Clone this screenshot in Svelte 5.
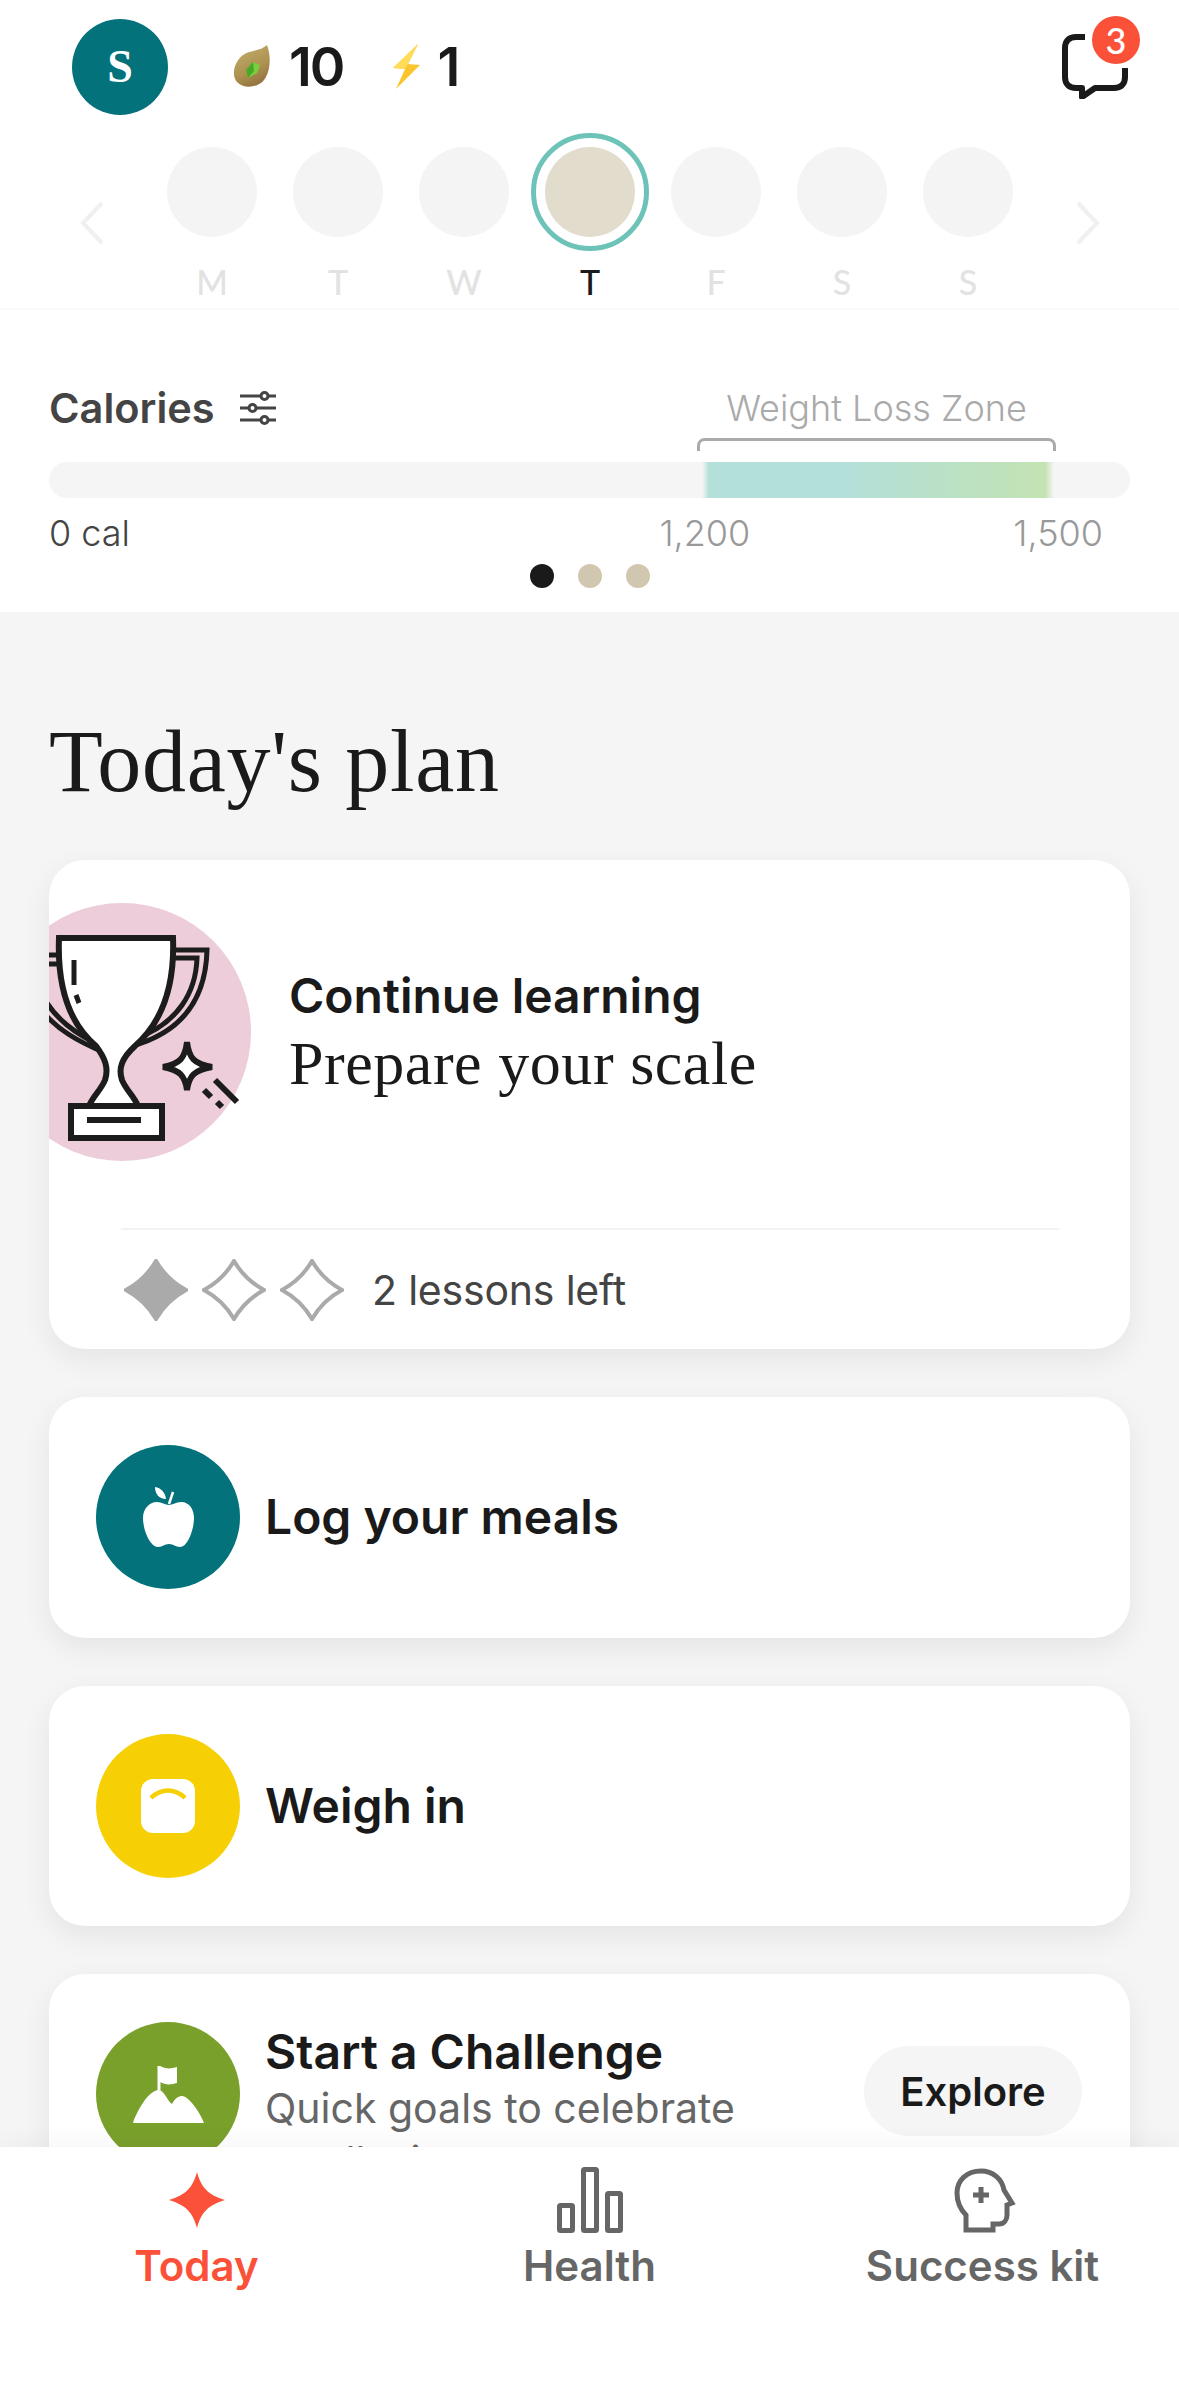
<script>
  const days = [
    { label: 'M' },
    { label: 'T' },
    { label: 'W' },
    { label: 'T', today: true },
    { label: 'F' },
    { label: 'S' },
    { label: 'S' }
  ];
</script>

<div class="page">
  <div class="scroller">
    <section class="top">
      <header class="bar">
        <div class="avatar">S</div>
        <svg class="seed" viewBox="0 0 36 42" aria-hidden="true">
          <defs>
            <linearGradient id="seedFill" x1="0.3" y1="0.1" x2="0.7" y2="1">
              <stop offset="0" stop-color="#bfa865" />
              <stop offset="0.55" stop-color="#ac9150" />
              <stop offset="1" stop-color="#8f6f3d" />
            </linearGradient>
          </defs>
          <path d="M33 0C37 10 37 26 30 35 24 43 9 44 3 37-3 30 0 17 9 10 16 5 27 6 33 0Z" fill="url(#seedFill)" />
          <path d="M19 17 26 20 23 28 14 33 12 25Z" fill="#76d03e" />
          <path d="M19 17 20 26 14 33 12 25Z" fill="#4aa828" />
        </svg>
        <span class="count">10</span>
        <svg class="bolt" viewBox="0 0 27 45" aria-hidden="true">
          <path d="M25 0 0 24 12 25 3 45 27 21 15 20Z" fill="#fbc52d" />
          <path d="M25 0 0 24 12 25 15 20Z" fill="#ffdc5a" />
        </svg>
        <span class="count">1</span>
        <div class="chat">
          <svg viewBox="0 0 66 65" aria-hidden="true">
            <path d="M23 3H14C7 3 3 7 3 14V43C3 50 7 54 14 54H20V63L33 54H52C59 54 63 50 63 43V34" fill="none" stroke="#1a1a1a" stroke-width="6" stroke-linejoin="round" />
          </svg>
          <span class="badge">3</span>
        </div>
      </header>

      <div class="week">
        <svg class="chev" viewBox="0 0 24 44" aria-hidden="true"><path d="M22 2 3 22 22 42" /></svg>
        {#each days as day}
          <div class="day" class:today={day.today}>
            <div class="ring"><div class="dot"></div></div>
            <span>{day.label}</span>
          </div>
        {/each}
        <svg class="chev" viewBox="0 0 24 44" aria-hidden="true"><path d="M2 2 21 22 2 42" /></svg>
      </div>

      <div class="calories">
        <div class="cal-head">
          <h3>Calories</h3>
          <svg class="sliders" viewBox="0 0 36 36" aria-hidden="true">
            <path d="M0 6H21M28 6H36M0 18H9M16 18H36M0 30H21M28 30H36" />
            <circle cx="24.5" cy="6" r="3.5" />
            <circle cx="12.5" cy="18" r="3.5" />
            <circle cx="24.5" cy="30" r="3.5" />
          </svg>
          <div class="zone-label">
            <span>Weight Loss Zone</span>
            <svg viewBox="0 0 359 13" aria-hidden="true"><path d="M1.5 13V8C1.5 4 4 1.5 8 1.5H351C355 1.5 357.5 4 357.5 8V13" /></svg>
          </div>
        </div>
        <div class="track"><div class="zone"></div></div>
        <div class="ticks">
          <span class="zero">0 cal</span>
          <span class="tick">1,200</span>
          <span class="tick last">1,500</span>
        </div>
        <div class="pager">
          <i class="on"></i><i></i><i></i>
        </div>
      </div>
    </section>

    <main class="plan">
      <h1>Today's plan</h1>

      <article class="card learn">
        <div class="learn-top">
          <div class="pic">
            <svg viewBox="-7 903 258 258" aria-hidden="true">
              <g fill="none" stroke="#1c1c1c" stroke-width="5">
                <path d="M40 955H59M40 964H62" />
                <path d="M40 990C52 1018 78 1036 103 1046M40 1008C56 1030 80 1042 103 1052" />
                <path d="M173 950H207C206 990 190 1030 132 1046M173 958H197C196 990 180 1024 132 1040" />
                <path d="M59 938H173C175 990 160 1024 135 1046 122 1058 118 1068 122 1080 126 1090 134 1096 138 1106H89C93 1096 101 1090 105 1080 109 1068 105 1058 96 1046 70 1024 57 990 59 938Z" fill="#fff" stroke-width="6" />
                <path d="M74 960V985M76 995 79 1003" stroke-width="5" />
                <rect x="71" y="1106" width="91" height="32" fill="#fff" stroke-width="6" />
                <path d="M87 1120H141" stroke-width="6" />
                <path d="M187 1042C189 1058 194 1064 212 1067 194 1070 189 1076 187 1090 185 1076 180 1070 163 1067 180 1064 185 1058 187 1042Z" fill="#fff" stroke-width="6" />
                <path d="M215 1080 237 1102M204 1090 211 1097M217 1102 222 1107" stroke-width="6" />
              </g>
            </svg>
          </div>
          <div class="learn-text">
            <h2>Continue learning</h2>
            <p>Prepare your scale</p>
          </div>
        </div>
        <div class="learn-foot">
          <svg class="diamond" viewBox="0 0 64 62" aria-hidden="true"><path class="fill" d="M32 2C39 14 49 24 62 31 49 38 39 48 32 60 25 48 15 38 2 31 15 24 25 14 32 2Z" /></svg>
          <svg class="diamond" viewBox="0 0 64 62" aria-hidden="true"><path d="M32 2C39 14 49 24 62 31 49 38 39 48 32 60 25 48 15 38 2 31 15 24 25 14 32 2Z" /></svg>
          <svg class="diamond" viewBox="0 0 64 62" aria-hidden="true"><path d="M32 2C39 14 49 24 62 31 49 38 39 48 32 60 25 48 15 38 2 31 15 24 25 14 32 2Z" /></svg>
          <span>2 lessons left</span>
        </div>
      </article>

      <article class="card task">
        <div class="circle teal">
          <svg viewBox="0 0 51 60" width="51" height="60" aria-hidden="true">
            <path d="M12 0C18 1 22 5 23 12 16 12 12 7 12 0Z" fill="#fff" />
            <path d="M30 5 26 17" stroke="#fff" stroke-width="2.5" fill="none" />
            <path d="M14 15C19 15 22 18 26 18 30 18 33 15 38 15 47 15 51 23 51 31 51 42 45 60 37 60 32 60 31 57 26 57 21 57 20 60 15 60 7 60 0 43 0 31 0 22 6 15 14 15Z" fill="#fff" />
          </svg>
        </div>
        <h2>Log your meals</h2>
      </article>

      <article class="card task">
        <div class="circle yellow">
          <div class="scale">
            <svg viewBox="0 0 36 12" width="36" height="12" aria-hidden="true"><path d="M1 10C11 0 25 0 35 10" fill="none" stroke="#f6d004" stroke-width="4.5" /></svg>
          </div>
        </div>
        <h2>Weigh in</h2>
      </article>

      <article class="card task challenge">
        <div class="circle green">
          <svg viewBox="0 0 71 57" width="71" height="57" aria-hidden="true">
            <path d="M26 0V24" stroke="#fff" stroke-width="3" />
            <path d="M27 0C32 3 38 3 44 1V17C38 19 32 19 27 16Z" fill="#fff" />
            <path d="M0 57C2 50 14 24 26 24 31 24 35 36 39 38 42 32 46 30 49 30 56 30 68 48 71 57Z" fill="#fff" />
          </svg>
        </div>
        <div class="challenge-text">
          <h2>Start a Challenge</h2>
          <p>Quick goals to celebrate small wins</p>
        </div>
        <button>Explore</button>
      </article>
    </main>
  </div>

  <nav>
    <div class="tab active">
      <svg viewBox="0 0 66 66" aria-hidden="true">
        <path d="M33 5C37 20 44 28 61 33 44 38 37 46 33 61 29 46 22 38 5 33 22 28 29 20 33 5Z" fill="#fb5138" />
      </svg>
      <span>Today</span>
    </div>
    <div class="tab">
      <svg viewBox="0 0 66 66" aria-hidden="true" fill="none" stroke="#666" stroke-width="5">
        <rect x="2.5" y="38.5" width="13" height="25" rx="1" />
        <rect x="26.5" y="2.5" width="13" height="61" rx="1" />
        <rect x="50.5" y="26.5" width="13" height="37" rx="1" />
      </svg>
      <span>Health</span>
    </div>
    <div class="tab">
      <svg viewBox="0 0 66 66" aria-hidden="true" fill="none" stroke="#666" stroke-width="5">
        <path d="M16 63V48C10 42 7 35 7 26 7 13 17 4 31 4 43 4 52 12 54 23L62 36 57 38V48C57 53 54 57 49 57H43V63Z" />
        <path d="M31 20V36M23 28H39" />
      </svg>
      <span>Success kit</span>
    </div>
  </nav>
</div>

<style>
  :global(body) {
    margin: 0;
    background: #fff;
  }

  .page {
    width: 1179px;
    height: 2396px;
    display: flex;
    flex-direction: column;
    overflow: hidden;
    font-family: Inter, "Liberation Sans", sans-serif;
    color: #1a1a1a;
  }

  .scroller {
    flex: 1;
    min-height: 0;
    overflow: hidden;
    background: #f5f5f5;
  }

  .top {
    height: 612px;
    box-sizing: border-box;
    background: #fff;
  }

  /* header row */
  .bar {
    height: 133px;
    box-sizing: border-box;
    padding: 19px 51px 0 72px;
    display: flex;
    align-items: flex-start;
  }

  .avatar {
    width: 96px;
    height: 96px;
    border-radius: 50%;
    background: #04727b;
    color: #fff;
    font: 700 46px/96px "Liberation Serif", serif;
    text-align: center;
  }

  .seed {
    width: 36px;
    height: 42px;
    margin: 26px 19px 0 66px;
  }

  .bolt {
    width: 27px;
    height: 45px;
    margin: 25px 17px 0 50px;
  }

  .count {
    font-size: 54px;
    font-weight: 600;
    line-height: 54px;
    margin-top: 21px;
    letter-spacing: -2px;
  }

  .chat {
    position: relative;
    width: 66px;
    height: 65px;
    margin: 15px 0 0 auto;
  }

  .chat svg {
    display: block;
  }

  .badge {
    position: absolute;
    left: 30px;
    top: -18px;
    width: 48px;
    height: 48px;
    border-radius: 50%;
    background: #fb5138;
    color: #fff;
    font: 500 36px/48px Lato, sans-serif;
    text-align: center;
  }

  /* week strip */
  .week {
    height: 177px;
    box-sizing: border-box;
    padding-left: 80px;
    display: flex;
    align-items: flex-start;
    border-bottom: 2px solid #fafafa;
  }

  .chev {
    width: 24px;
    height: 44px;
    margin-top: 68px;
    flex: none;
    fill: none;
    stroke: #f0f0f0;
    stroke-width: 4;
  }

  .week .chev:first-child {
    margin-right: 45px;
  }

  .week .chev:last-child {
    margin-left: 45px;
  }

  .day {
    width: 126px;
    flex: none;
    display: flex;
    flex-direction: column;
    align-items: center;
    font: 500 34px/34px Lato, sans-serif;
    color: #e2e2e2;
  }

  .day span {
    margin-top: 14px;
  }

  .ring {
    width: 118px;
    height: 118px;
    box-sizing: border-box;
    border-radius: 50%;
    display: flex;
    align-items: center;
    justify-content: center;
  }

  .dot {
    width: 90px;
    height: 90px;
    border-radius: 50%;
    background: #f4f4f4;
  }

  .today {
    color: #1a1a1a;
  }

  .today .ring {
    border: 5px solid #6dc3b8;
  }

  .today .dot {
    background: #e2dccd;
  }

  /* calories */
  .calories {
    padding: 0 49px;
  }

  .cal-head {
    height: 152px;
    box-sizing: border-box;
    padding-top: 73px;
    display: flex;
    align-items: flex-start;
    position: relative;
  }

  h3 {
    margin: 0;
    font-size: 41.5px;
    line-height: 50px;
    font-weight: 600;
    color: #444;
  }

  .sliders {
    width: 36px;
    height: 36px;
    margin: 7px 0 0 25px;
    fill: #fff;
    stroke: #444;
    stroke-width: 3;
  }

  .zone-label {
    width: 359px;
    margin: 4px 74px 0 auto;
    display: flex;
    flex-direction: column;
    align-items: center;
    color: #aaa;
    font-size: 36px;
    font-weight: 300;
    line-height: 42px;
  }

  .zone-label svg {
    width: 359px;
    height: 13px;
    margin-top: 9px;
    fill: none;
    stroke: #aaa;
    stroke-width: 3;
  }

  .track {
    height: 36px;
    border-radius: 18px;
    background: #f5f5f5;
    overflow: hidden;
  }

  .zone {
    width: 352px;
    height: 100%;
    margin-left: 653px;
    background: linear-gradient(90deg, #f5f5f5 0, #b3e0d8 2%, #b3e0d8 42%, #c3e3b3 97.5%, #f5f5f5 100%);
  }

  .ticks {
    display: flex;
    margin-top: 14px;
    padding-right: 27px;
    font-size: 36px;
    font-weight: 300;
    line-height: 42px;
    color: #999;
  }

  .zero {
    color: #444;
    margin-right: auto;
  }

  .tick.last {
    margin-left: 263px;
  }

  .pager {
    display: flex;
    justify-content: center;
    gap: 24px;
    margin: 10px 0 0;
  }

  .pager i {
    width: 24px;
    height: 24px;
    border-radius: 50%;
    background: #d1c7b0;
  }

  .pager .on {
    background: #1a1a1a;
  }

  /* plan */
  .plan {
    padding: 0 49px;
  }

  h1 {
    margin: 0;
    height: 248px;
    box-sizing: border-box;
    padding-top: 100px;
    font: 400 88px/100px "Liberation Serif", serif;
    letter-spacing: 0.7px;
    color: #1a1a1a;
  }

  .card {
    background: #fff;
    border-radius: 36px;
    box-shadow: 0 10px 30px rgba(0, 0, 0, 0.07);
    margin-bottom: 48px;
  }

  .learn {
    height: 489px;
    overflow: hidden;
    box-sizing: border-box;
    padding-top: 43px;
  }

  .learn-top {
    display: flex;
    align-items: center;
  }

  .pic {
    width: 258px;
    height: 258px;
    flex: none;
    margin-left: -56px;
    border-radius: 50%;
    background: #eccdd9;
  }

  .pic svg {
    display: block;
    width: 100%;
    height: 100%;
  }

  .learn-text {
    margin-left: 38px;
    padding-bottom: 3px;
  }

  .learn-text h2 {
    margin: 0;
    font-size: 48px;
    line-height: 60px;
    font-weight: 600;
  }

  .learn-text p {
    margin: 5px 0 0;
    font: 400 62px/64px "Liberation Serif", serif;
    letter-spacing: 0.55px;
    color: #1a1a1a;
  }

  .learn-foot {
    margin: 67px 71px 0 72px;
    padding-top: 29px;
    border-top: 2px solid #f2f2f2;
    display: flex;
    align-items: center;
    gap: 14px;
  }

  .diamond {
    width: 64px;
    height: 62px;
    flex: none;
    fill: #fff;
    stroke: #aaa;
    stroke-width: 4;
  }

  .diamond:first-child {
    margin-left: 3px;
  }

  .diamond .fill {
    fill: #aaa;
  }

  .learn-foot span {
    margin-left: 14px;
    font-size: 41px;
    letter-spacing: -0.2px;
    color: #444;
  }

  .task {
    height: 240.5px;
    box-sizing: border-box;
    padding-left: 47px;
    display: flex;
    align-items: center;
  }

  .task h2 {
    margin: 0;
    font-size: 48px;
    line-height: 60px;
    font-weight: 600;
  }

  .circle {
    width: 144px;
    height: 144px;
    flex: none;
    border-radius: 50%;
    margin-right: 25px;
    display: flex;
    align-items: center;
    justify-content: center;
  }

  .teal {
    background: #04727b;
  }

  .yellow {
    background: #f6d004;
  }

  .green {
    background: #7aa02c;
  }

  .scale {
    width: 54px;
    height: 54px;
    border-radius: 12px;
    background: #fff;
    display: flex;
    justify-content: center;
    padding-top: 9px;
    box-sizing: border-box;
  }

  .challenge {
    align-items: flex-start;
    padding-top: 48px;
    margin-bottom: 0;
    padding-right: 48px;
  }

  .challenge-text {
    flex: 1;
  }

  .challenge-text p {
    margin: 0;
    width: 490px;
    font-size: 41px;
    line-height: 53px;
    color: #666;
  }

  button {
    width: 218px;
    height: 90px;
    margin-top: 24px;
    border: 0;
    border-radius: 45px;
    background: #f5f5f5;
    color: #1a1a1a;
    font: 600 40px Inter, sans-serif;
  }

  /* bottom tabs */
  nav {
    height: 249px;
    flex: none;
    background: #fff;
    position: relative;
    display: grid;
    grid-template-columns: repeat(3, 1fr);
    box-shadow: 0 -8px 20px rgba(0, 0, 0, 0.03);
  }

  .tab {
    display: flex;
    flex-direction: column;
    align-items: center;
    padding-top: 20px;
    color: #666;
    font-size: 42px;
    font-weight: 600;
    line-height: 50px;
  }

  .tab svg {
    width: 66px;
    height: 66px;
    margin-bottom: 8px;
  }

  .active {
    color: #fb5138;
  }
</style>
